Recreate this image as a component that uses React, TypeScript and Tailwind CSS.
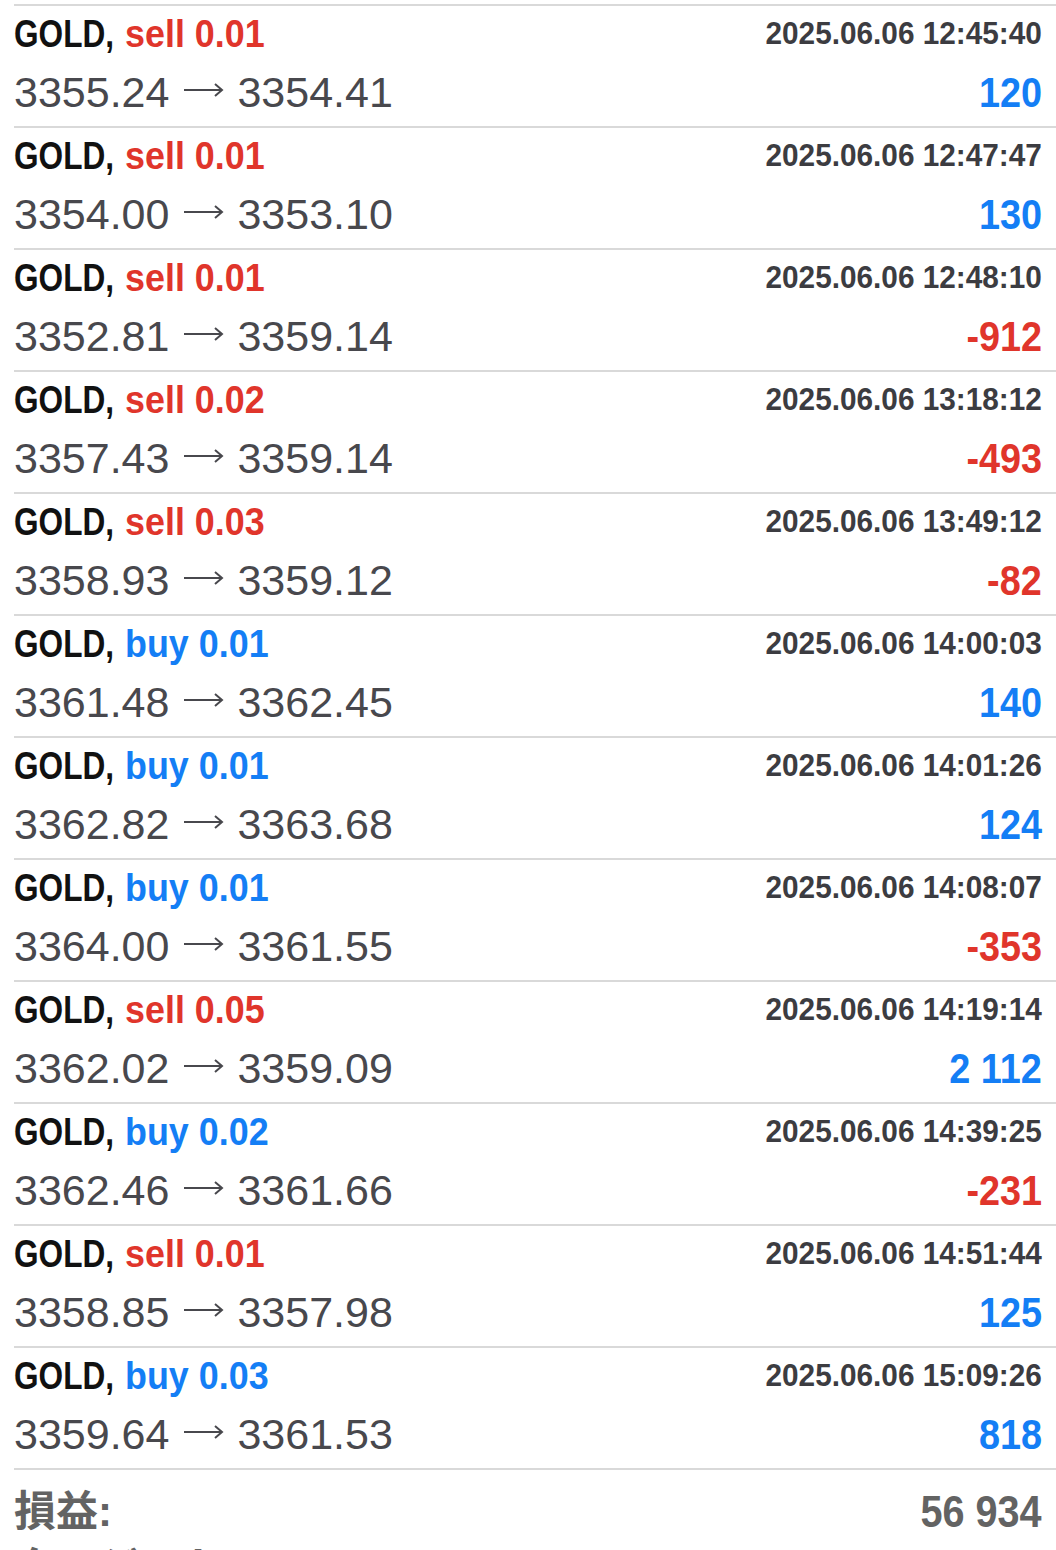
const trades = [
  { side: "sell", vol: "0.01", from: "3355.24", to: "3354.41", time: "2025.06.06 12:45:40", profit: "120" },
  { side: "sell", vol: "0.01", from: "3354.00", to: "3353.10", time: "2025.06.06 12:47:47", profit: "130" },
  { side: "sell", vol: "0.01", from: "3352.81", to: "3359.14", time: "2025.06.06 12:48:10", profit: "-912" },
  { side: "sell", vol: "0.02", from: "3357.43", to: "3359.14", time: "2025.06.06 13:18:12", profit: "-493" },
  { side: "sell", vol: "0.03", from: "3358.93", to: "3359.12", time: "2025.06.06 13:49:12", profit: "-82" },
  { side: "buy", vol: "0.01", from: "3361.48", to: "3362.45", time: "2025.06.06 14:00:03", profit: "140" },
  { side: "buy", vol: "0.01", from: "3362.82", to: "3363.68", time: "2025.06.06 14:01:26", profit: "124" },
  { side: "buy", vol: "0.01", from: "3364.00", to: "3361.55", time: "2025.06.06 14:08:07", profit: "-353" },
  { side: "sell", vol: "0.05", from: "3362.02", to: "3359.09", time: "2025.06.06 14:19:14", profit: "2 112" },
  { side: "buy", vol: "0.02", from: "3362.46", to: "3361.66", time: "2025.06.06 14:39:25", profit: "-231" },
  { side: "sell", vol: "0.01", from: "3358.85", to: "3357.98", time: "2025.06.06 14:51:44", profit: "125" },
  { side: "buy", vol: "0.03", from: "3359.64", to: "3361.53", time: "2025.06.06 15:09:26", profit: "818" },
]

const sans = "font-['Liberation_Sans',Arial,sans-serif]"

function Arrow() {
  return (
    <svg width="40" height="14" viewBox="0 0 40 14" className="ml-[15px] mr-[13px] inline-block align-[10px]" fill="none" stroke="#48484d" strokeWidth="2">
      <path d="M0 7H38" />
      <path d="M31 1L38 7L31 13" />
    </svg>
  )
}

export default function App() {
  return (
    <div className={`h-[1550px] w-[1056px] overflow-hidden bg-white pt-[4px] ${sans}`}>
      {trades.map((t, i) => (
        <div key={i} className="ml-[14px] flex h-[122px] justify-between border-t-2 border-[#d9d9d9] pr-[14px]">
          {/* left: symbol + prices */}
          <div className="flex flex-col">
            <div className="pt-1 h-[52px] whitespace-nowrap text-[39px] leading-[48px] font-bold">
              <span className="inline-block w-[100px]">
                <span className="inline-block origin-left scale-x-[0.81] text-[#111111]">GOLD,</span>
              </span>
              <span className="inline-block w-[11px]" />
              <span
                className={`inline-block origin-left scale-x-[0.92] ${
                  t.side === "sell" ? "text-[#e0352b]" : "text-[#147ef5]"
                }`}
              >
                {t.side} {t.vol}
              </span>
            </div>
            <div className="mt-[6px] whitespace-nowrap text-[43px] leading-[56px] text-[#48484d]">
              {t.from}
              <Arrow />
              {t.to}
            </div>
          </div>
          {/* right: time + profit */}
          <div className="flex flex-col items-end">
            <div className="pt-2 h-[48px] whitespace-nowrap">
              <span className="inline-block origin-right scale-x-[0.96] text-[31px] leading-[40px] font-bold text-[#3c3c41]">
                {t.time}
              </span>
            </div>
            <div className="mt-[15px] whitespace-nowrap">
              <span
                className={`inline-block origin-right scale-x-[0.9] text-[42px] leading-[48px] font-bold ${
                  t.profit.startsWith("-") ? "text-[#e0352b]" : "text-[#147ef5]"
                }`}
              >
                {t.profit}
              </span>
            </div>
          </div>
        </div>
      ))}
      <div className="ml-[14px] border-t-2 border-[#d9d9d9] pr-[14px]">
        <div className="flex items-center justify-between pt-[14px]">
          <span className="font-['Liberation_Sans','Noto_Sans_CJK_JP',sans-serif] text-[42px] leading-[56px] font-bold text-[#636363]">
            損益:
          </span>
          <span className="inline-block origin-right scale-x-[0.88] text-[45px] leading-[56px] font-bold text-[#636363]">
            56 934
          </span>
        </div>
        <div className="font-['Liberation_Sans','Noto_Sans_CJK_JP',sans-serif] text-[42px] leading-[56px] font-bold text-[#636363]">
          クレジット:
        </div>
      </div>
    </div>
  )
}
